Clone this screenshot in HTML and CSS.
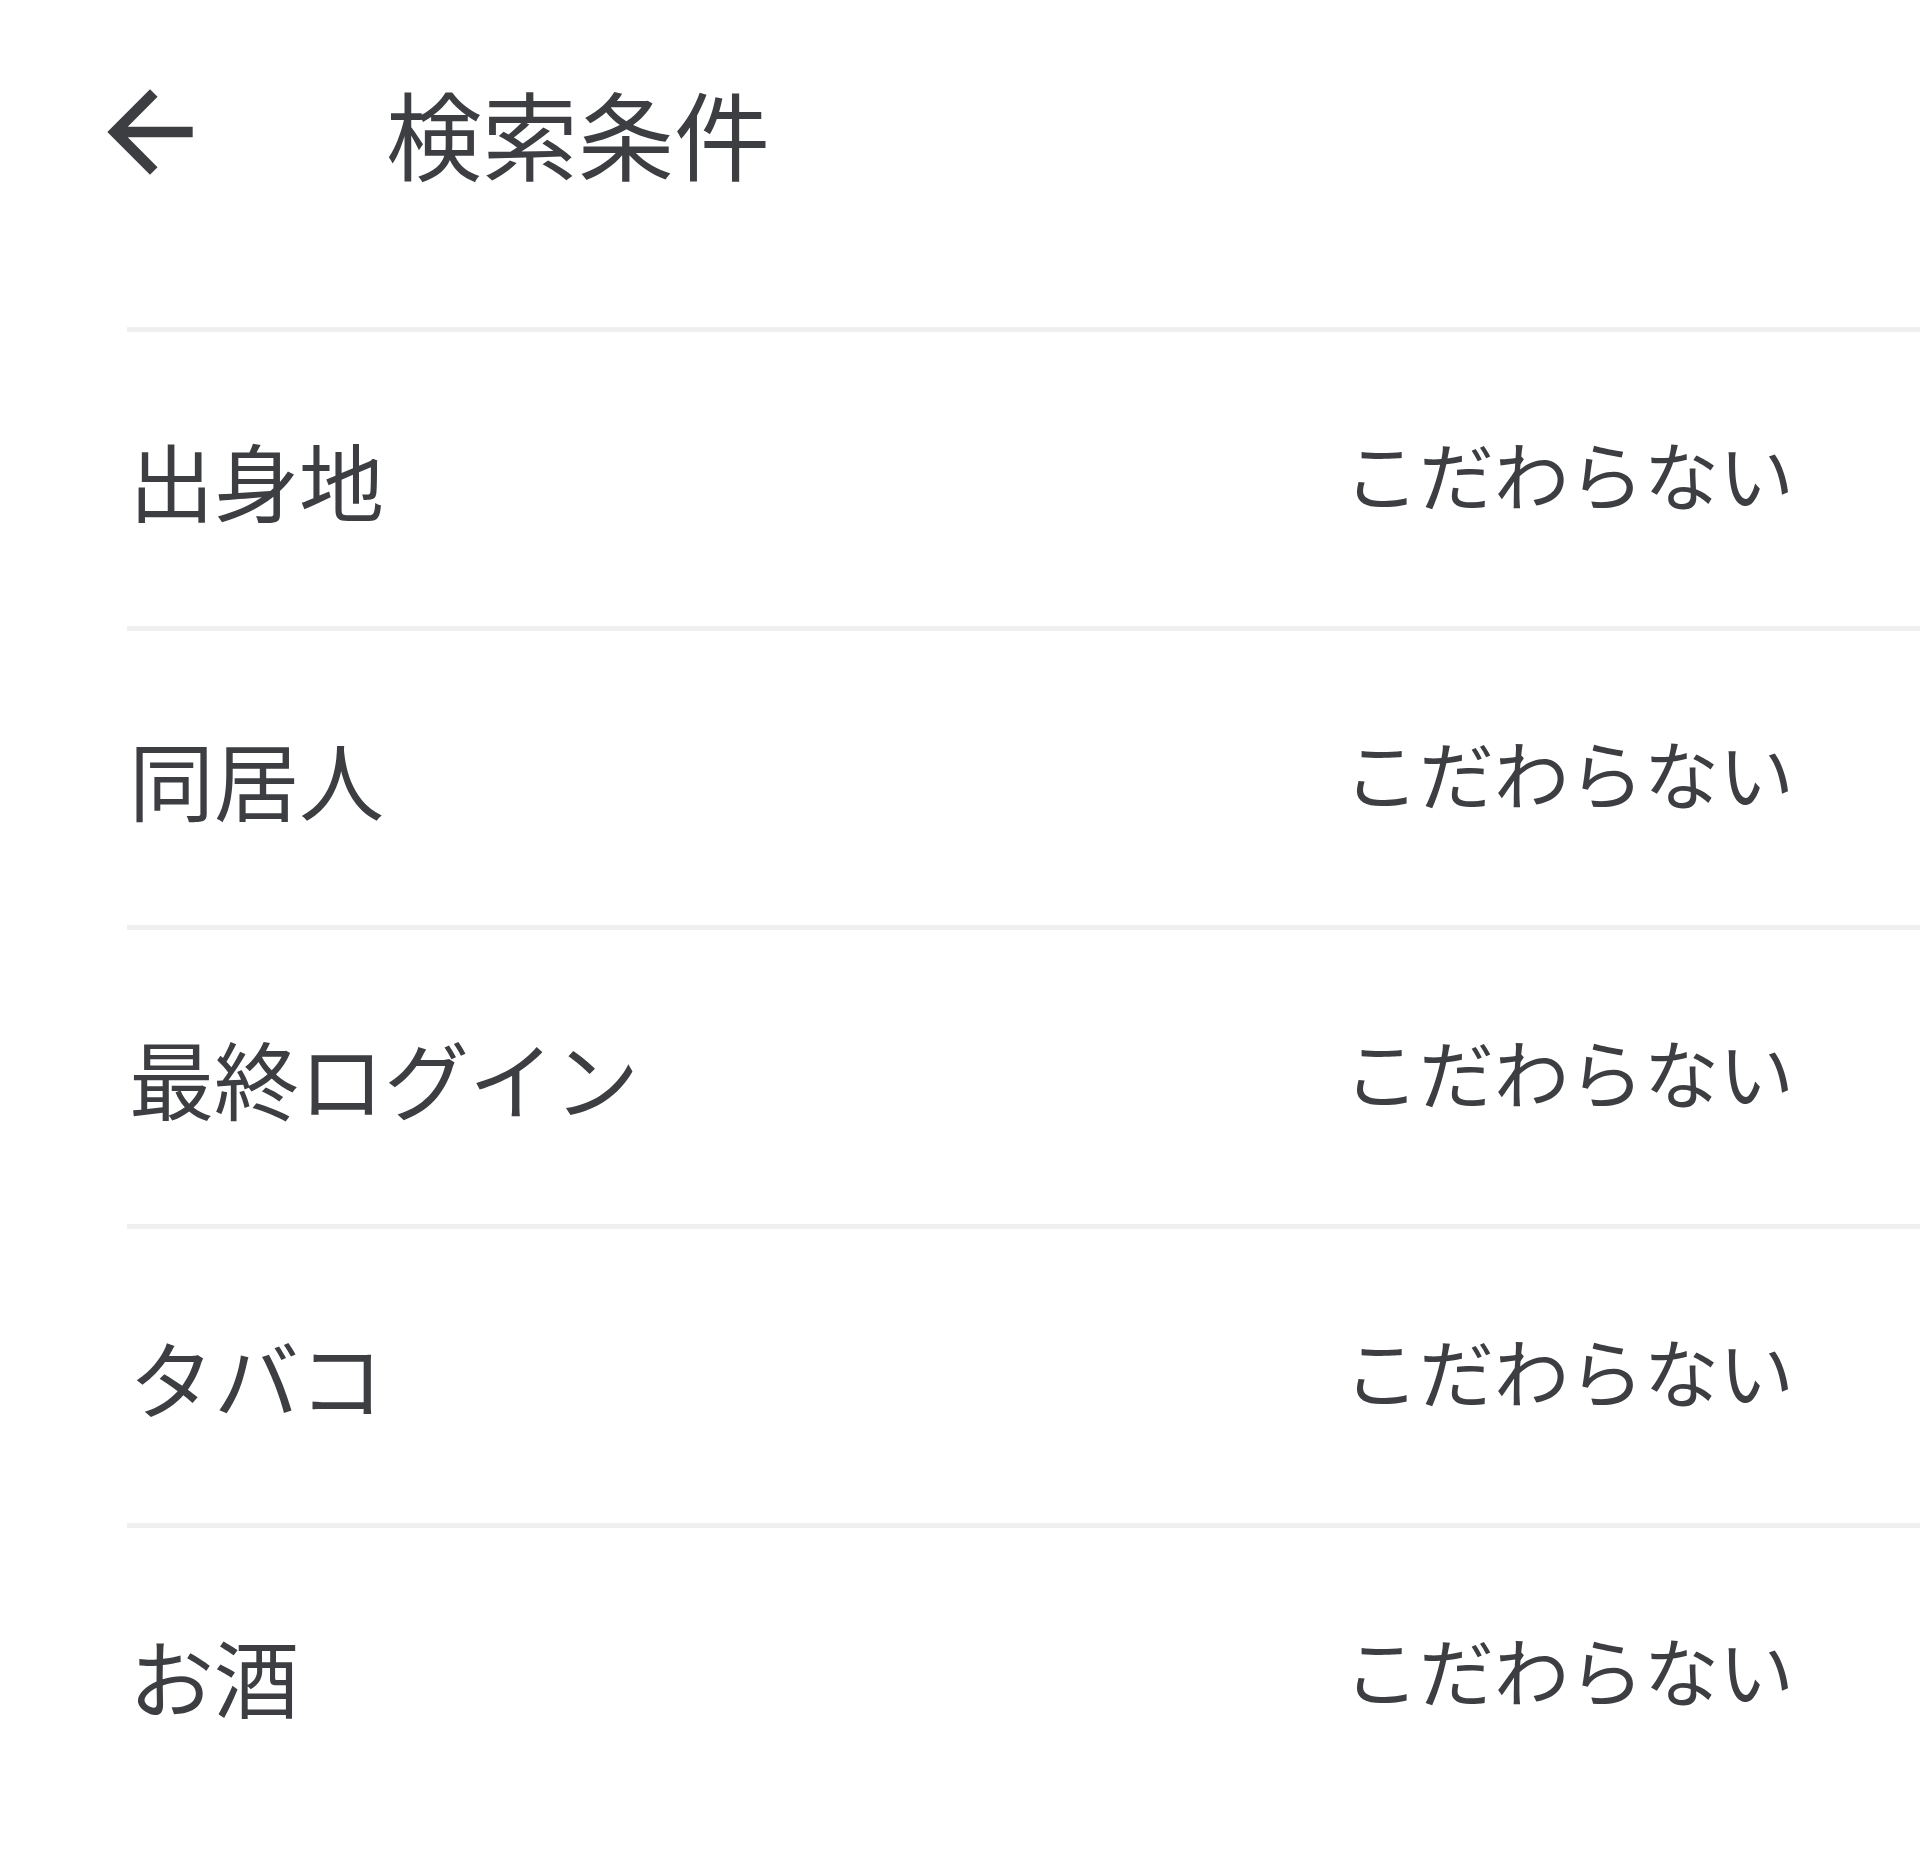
FILE: index.html
```html
<!DOCTYPE html>
<html lang="ja">
<head>
<meta charset="utf-8">
<title>検索条件</title>
<link rel="stylesheet" href="styles.css">
</head>
<body>
<header class="app-bar">
  <button class="back" aria-label="戻る">
    <svg viewBox="0 0 24 24" width="128" height="128"><path d="M20 11H7.83l5.59-5.59L12 4l-8 8 8 8 1.41-1.41L7.83 13H20v-2z" fill="currentColor"/></svg>
  </button>
  <h1 class="title">検索条件</h1>
</header>
<ul class="list">
  <li class="row"><span class="label">出身地</span><span class="value">こだわらない</span></li>
  <li class="row"><span class="label">同居人</span><span class="value">こだわらない</span></li>
  <li class="row"><span class="label">最終ログイン</span><span class="value">こだわらない</span></li>
  <li class="row"><span class="label">タバコ</span><span class="value">こだわらない</span></li>
  <li class="row"><span class="label">お酒</span><span class="value">こだわらない</span></li>
</ul>
</body>
</html>
```
FILE: styles.css
```css
html, body {
  margin: 0;
  padding: 0;
  background: #ffffff;
}
body {
  font-family: "Noto Sans CJK JP", "Noto Sans", sans-serif;
  color: #3c3e42;
}
.app-bar {
  height: 327px;
  display: flex;
  align-items: flex-start;
  padding-top: 68px;
  box-sizing: border-box;
}
.back {
  margin-left: 86px;
  width: 128px;
  height: 128px;
  padding: 0;
  border: 0;
  background: none;
  color: #3c3e42;
  display: block;
}
.back svg {
  display: block;
}
.title {
  margin: 0 0 0 172px;
  font-size: 96px;
  font-weight: 400;
  line-height: 128px;
}
.list {
  list-style: none;
  margin: 0 0 0 127px;
  padding: 0;
}
.row {
  height: 294px;
  border-top: 5px solid #efefef;
  display: flex;
  align-items: center;
  justify-content: space-between;
  padding-right: 126px;
}
.label {
  margin-left: 2px;
  font-size: 85px;
  line-height: 1.2;
}
.value {
  font-size: 75px;
  line-height: 1.2;
  padding-bottom: 12px;
}
```
